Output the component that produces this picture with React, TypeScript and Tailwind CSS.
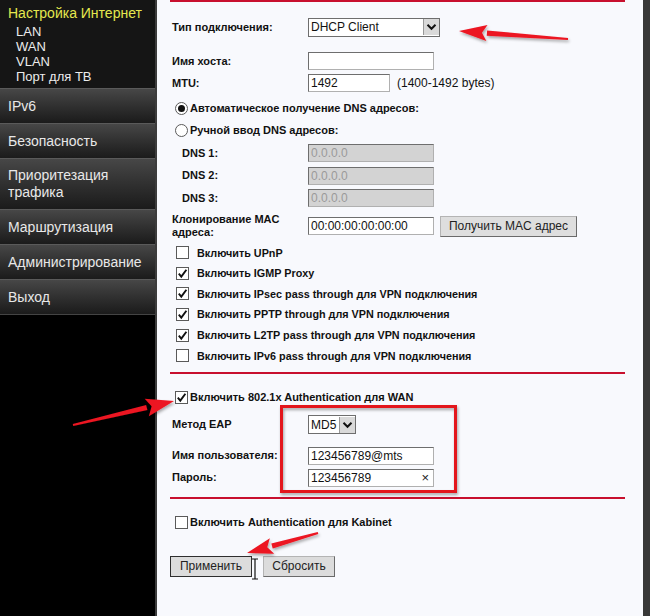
import React from "react";

const menuItems = [
  { label: ["IPv6"], h: "h-[35px]" },
  { label: ["Безопасность"], h: "h-[35px]" },
  { label: ["Приоритезация", "трафика"], h: "h-[51px]" },
  { label: ["Маршрутизация"], h: "h-[35px]" },
  { label: ["Администрирование"], h: "h-[35px]" },
  { label: ["Выход"], h: "h-[35px]" },
];

const subItems = ["LAN", "WAN", "VLAN", "Порт для ТВ"];

const checkRows = [
  { text: "Включить UPnP", checked: false },
  { text: "Включить IGMP Proxy", checked: true },
  { text: "Включить IPsec pass through для VPN подключения", checked: true },
  { text: "Включить PPTP through для VPN подключения", checked: true },
  { text: "Включить L2TP pass through для VPN подключения", checked: true },
  { text: "Включить IPv6 pass through для VPN подключения", checked: false },
];

const Box = ({ checked }: { checked: boolean }) => (
  <span className="w-[13px] h-[13px] shrink-0 border border-[#5a5a5a] bg-white flex items-center justify-center">
    {checked && (
      <svg width="11" height="11" viewBox="0 0 11 11">
        <path d="M1.8 5.6 L4.3 8.6 L9.4 1.8" fill="none" stroke="#111" strokeWidth="1.9" />
      </svg>
    )}
  </span>
);

const Radio = ({ checked }: { checked: boolean }) => (
  <span className="w-[13px] h-[13px] shrink-0 rounded-full border border-[#5a5a5a] bg-white flex items-center justify-center">
    {checked && <span className="w-[7px] h-[7px] rounded-full bg-[#111]"></span>}
  </span>
);

const Chevron = () => (
  <span className="w-[16px] h-[16px] bg-[#d9d9d9] border-l border-[#999] flex items-center justify-center">
    <svg width="11" height="8" viewBox="0 0 11 8">
      <path d="M1.5 1.8 L5.5 5.8 L9.5 1.8" fill="none" stroke="#111" strokeWidth="2" />
    </svg>
  </span>
);

const Input = ({ value = "", w = "w-[126px]", gray = false, clear = false }: { value?: string; w?: string; gray?: boolean; clear?: boolean }) => (
  <div
    className={
      w +
      " h-[18px] border border-[#b0b0b0] border-t-[#6e6e6e] border-l-[#6e6e6e] flex items-center justify-between pl-[2px] pr-[4px] text-[12px] " +
      (gray ? "bg-[#d3d3d3] text-[#9a9a9a]" : "bg-white text-[#111]")
    }
  >
    <span>{value}</span>
    {clear && <span className="text-[13px] leading-none text-[#222]">×</span>}
  </div>
);

const Row = ({ label, children, h = "h-[22px]", indent = false }: { label: React.ReactNode; children?: React.ReactNode; h?: string; indent?: boolean }) => (
  <div className={h + " flex items-center pl-[2px]"}>
    <div className={"w-[136px] shrink-0 text-[11px] font-bold leading-[13px] " + (indent ? "pl-[10px]" : "")}>{label}</div>
    {children}
  </div>
);

const RedLine = ({ className = "" }: { className?: string }) => (
  <div className={"h-[2px] w-[455px] bg-[#c8102e] " + className}></div>
);

const arrow = (x1: number, y1: number, x2: number, y2: number, L: number, W: number) => {
  const dx = x2 - x1;
  const dy = y2 - y1;
  const len = Math.hypot(dx, dy);
  const ux = dx / len;
  const uy = dy / len;
  const bx = x2 - ux * L;
  const by = y2 - uy * L;
  const px = -uy;
  const py = ux;
  return {
    shaft: `M${x1 - px * 1} ${y1 - py * 1} L${bx - px * 2.6} ${by - py * 2.6} L${bx + px * 2.6} ${by + py * 2.6} L${x1 + px * 1} ${y1 + py * 1} Z`,
    head: `M${x2} ${y2} L${bx + px * W} ${by + py * W} L${bx + ux * 5} ${by + uy * 5} L${bx - px * W} ${by - py * W} Z`,
  };
};

const arrows = [arrow(568, 39, 459, 31, 28, 8), arrow(73, 425, 174, 401, 28, 9), arrow(318, 533, 247, 553, 26, 8)];

export default function App() {
  return (
    <div className="relative w-[650px] h-[616px] overflow-hidden flex font-['Liberation_Sans',Arial,sans-serif] text-[#111]">
      {/* меню слева */}
      <aside className="w-[155px] shrink-0 bg-black flex flex-col">
        <div className="h-[88px] bg-[#151515] pl-[8px] pt-[4px]">
          <div className="text-[14px] leading-[18px] text-[#e4e84e]">Настройка Интернет</div>
          <ul className="pl-[8px] mt-[2px] text-[13px] leading-[15px] text-[#ececec]">
            {subItems.map((s) => (
              <li key={s}>{s}</li>
            ))}
          </ul>
        </div>
        {menuItems.map((m) => (
          <div
            key={m.label[0]}
            className={m.h + " border-t border-[#5a5a5a] bg-gradient-to-b from-[#474747] to-[#1b1b1b] px-[8px] flex flex-col justify-center text-[14px] leading-[17px] text-[#e8e8e8]"}
          >
            {m.label.map((l) => (
              <span key={l}>{l}</span>
            ))}
          </div>
        ))}
        <div className="border-t border-[#444]"></div>
      </aside>

      {/* форма */}
      <main className="flex-1 bg-[#f8f9fd] border-l-2 border-[#3c3c3c] pl-[13px]">
        <RedLine />
        <div className="mt-[14px]">
          <Row label="Тип подключения:">
            <div className="w-[132px] h-[19px] border border-[#6e6e6e] bg-white flex items-center justify-between pl-[2px] text-[12px]">
              <span>DHCP Client</span>
              <Chevron />
            </div>
          </Row>
        </div>
        <div className="mt-[12px]">
          <Row label="Имя хоста:">
            <Input />
          </Row>
          <Row label="MTU:">
            <Input value="1492" w="w-[82px]" />
            <span className="ml-[7px] text-[12px]">(1400-1492 bytes)</span>
          </Row>
        </div>
        <div className="mt-[3px] text-[11px] font-bold">
          <div className="h-[22px] flex items-center gap-[2px] pl-[5px]">
            <Radio checked />
            <span>Автоматическое получение DNS адресов:</span>
          </div>
          <div className="h-[22px] flex items-center gap-[2px] pl-[5px]">
            <Radio checked={false} />
            <span>Ручной ввод DNS адресов:</span>
          </div>
        </div>
        <div className="mt-[1px]">
          <Row label="DNS 1:" h="h-[22.5px]" indent>
            <Input value="0.0.0.0" gray />
          </Row>
          <Row label="DNS 2:" h="h-[22.5px]" indent>
            <Input value="0.0.0.0" gray />
          </Row>
          <Row label="DNS 3:" h="h-[22.5px]" indent>
            <Input value="0.0.0.0" gray />
          </Row>
        </div>
        <div className="mt-[3.5px]">
          <Row label={<>Клонирование MAC<br />адреса:</>} h="h-[26px]">
            <Input value="00:00:00:00:00:00" />
            <button className="ml-[6px] w-[137px] h-[21px] bg-[#dedede] border border-[#b4b4b4] border-b-[#6a6a6a] border-r-[#6a6a6a] text-[12px] text-[#222]">
              Получить MAC адрес
            </button>
          </Row>
        </div>
        <div className="mt-[3.5px]">
          {checkRows.map((c) => (
            <div key={c.text} className="h-[20.6px] flex items-center pl-[6px] gap-[8px] text-[10.8px] font-bold">
              <Box checked={c.checked} />
              <span>{c.text}</span>
            </div>
          ))}
        </div>
        <RedLine className="mt-[6px]" />
        <div className="mt-[12px] h-[22px] flex items-center gap-[2px] pl-[5px] text-[11px] font-bold">
          <Box checked />
          <span>Включить 802.1x Authentication для WAN</span>
        </div>
        <div className="mt-[5.5px]">
          <Row label="Метод EAP">
            <div className="w-[48px] h-[19px] border border-[#6e6e6e] bg-white flex items-center justify-between pl-[2px] text-[12px]">
              <span>MD5</span>
              <Chevron />
            </div>
          </Row>
        </div>
        <div className="mt-[9px]">
          <Row label="Имя пользователя:">
            <Input value="123456789@mts" />
          </Row>
          <Row label="Пароль:">
            <Input value="123456789" clear />
          </Row>
        </div>
        <RedLine className="mt-[8.5px]" />
        <div className="mt-[12.5px] h-[22px] flex items-center gap-[2px] pl-[5px] text-[11px] font-bold">
          <Box checked={false} />
          <span>Включить Authentication для Kabinet</span>
        </div>
        <div className="mt-[22px] flex gap-[11px]">
          <button className="w-[82px] h-[21px] bg-[#dcdcdc] border border-[#2e2e2e] text-[12px] text-[#222]">Применить</button>
          <button className="w-[72px] h-[21px] bg-[#dcdcdc] border border-[#b4b4b4] border-b-[#6a6a6a] border-r-[#6a6a6a] text-[12px] text-[#222]">Сбросить</button>
        </div>
      </main>
      <div className="w-[7px] shrink-0 bg-[#383838]"></div>

      {/* пометки поверх скриншота */}
      <svg className="absolute inset-0 pointer-events-none" width="650" height="616">
        <defs>
          <filter id="sh" x="-20%" y="-50%" width="140%" height="200%">
            <feDropShadow dx="1" dy="2" stdDeviation="1.5" floodColor="#000" floodOpacity="0.35" />
          </filter>
        </defs>
        <rect x="281.5" y="406.5" width="174" height="85" fill="none" stroke="#e3121b" strokeWidth="3" filter="url(#sh)" />
        {arrows.map((a, i) => (
          <g key={i} fill="#ec1520" filter="url(#sh)">
            <path d={a.shaft} />
            <path d={a.head} />
          </g>
        ))}
        <path d="M252 559 h6 M255 559 v20 M252 579 h6" stroke="#111" strokeWidth="1.2" fill="none" />
      </svg>
    </div>
  );
}
